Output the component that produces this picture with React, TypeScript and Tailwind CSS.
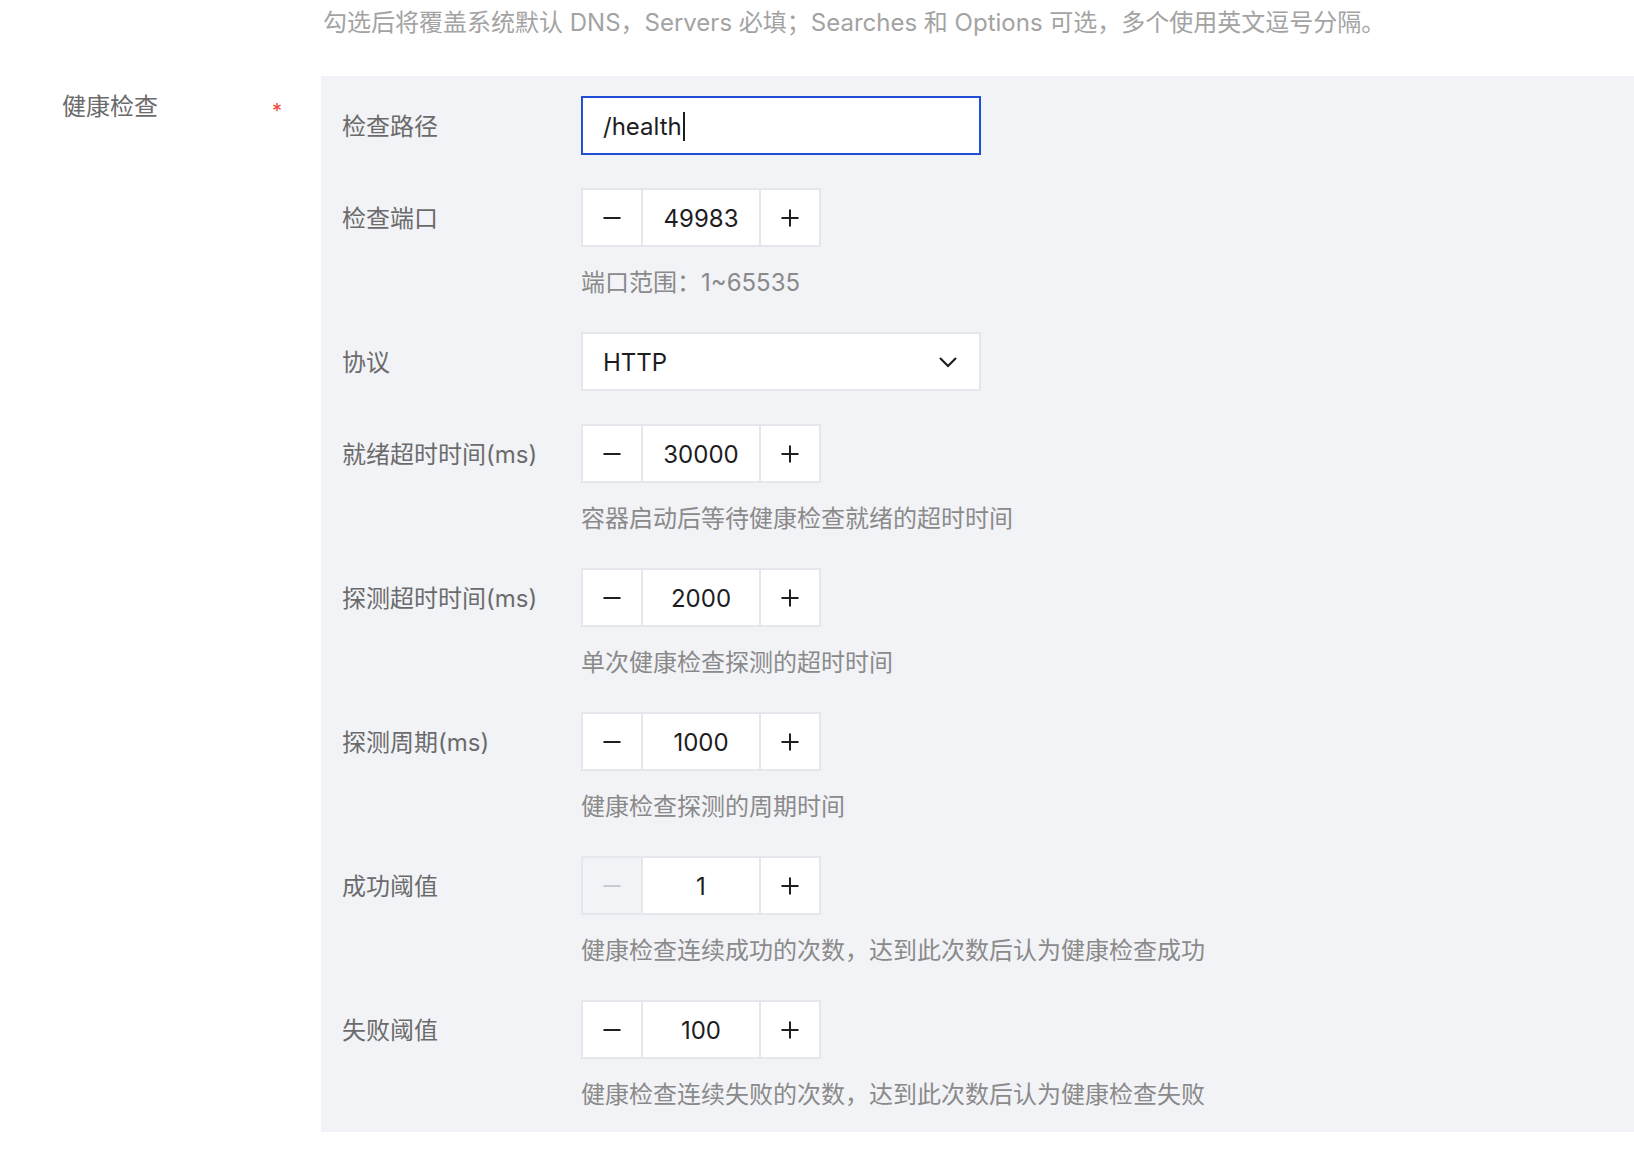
import React from "react";

const font = {
  fontFamily: 'Inter, "Noto Sans CJK SC", "Noto Sans", sans-serif',
};

function MinusIcon({ muted }: { muted?: boolean }) {
  return (
    <svg width="20" height="20" viewBox="0 0 20 20" fill="none">
      <path d="M1.5 10h17" stroke={muted ? "#c9cbd1" : "#1f1f1f"} strokeWidth="2" />
    </svg>
  );
}

function PlusIcon() {
  return (
    <svg width="20" height="20" viewBox="0 0 20 20" fill="none">
      <path d="M1.5 10h17M10 1.5v17" stroke="#1f1f1f" strokeWidth="2" />
    </svg>
  );
}

function Stepper({ value, minDisabled }: { value: string; minDisabled?: boolean }) {
  return (
    <div className="flex h-[59px] w-[240px] gap-[2px] border-2 border-[#e6e7ec] bg-[#e6e7ec]">
      <button
        className={
          minDisabled
            ? "flex w-[58px] items-center justify-center bg-[#f2f3f7]"
            : "flex w-[58px] items-center justify-center bg-white"
        }
      >
        <MinusIcon muted={minDisabled} />
      </button>
      <div className="flex w-[116px] items-center justify-center bg-white pt-[2px] text-[24px] text-[#1d1d1f]">
        {value}
      </div>
      <button className="flex w-[58px] items-center justify-center bg-white">
        <PlusIcon />
      </button>
    </div>
  );
}

function Help({ children }: { children: React.ReactNode }) {
  return (
    <div className="pt-[21px] pb-[1px] text-[24px] leading-[30px] text-[#8a8a8a]">{children}</div>
  );
}

function Row({ label, children }: { label: string; children: React.ReactNode }) {
  return (
    <div className="mb-[33px] flex last:mb-0">
      <div className="flex h-[59px] w-[239px] shrink-0 items-center pt-[2px] text-[24px] text-[#6b6b6b]">
        {label}
      </div>
      <div>{children}</div>
    </div>
  );
}

export default function App() {
  return (
    <div className="h-[1162px] w-[1634px] overflow-hidden bg-white" style={font}>
      <div className="h-[76px] pl-[323px] pt-[8px] text-[24px] leading-[30px] text-[#a3a3a3]">
        勾选后将覆盖系统默认 DNS，Servers 必填；Searches 和 Options 可选，多个使用英文逗号分隔。
      </div>
      <div className="flex">
        <div className="flex w-[321px] shrink-0 items-start pt-[16px]">
          <div className="w-[272px] pl-[62px] text-[24px] leading-[30px] text-[#6b6b6b]">健康检查</div>
          <div className="pt-[4px] text-[20px] leading-[30px] text-[#f04438]">*</div>
        </div>
        <div className="flex-1 bg-[#f2f3f7] pt-[20px] pb-[21px] pl-[21px]">
          <Row label="检查路径">
            <div className="flex h-[59px] w-[400px] items-center border-2 border-[#1f4fd6] bg-white pl-[20px] pt-[2px] text-[24px] text-[#1d1d1f]">
              /health
              <span className="ml-[1px] inline-block h-[29px] w-[2px] bg-[#1d1d1f]" />
            </div>
          </Row>
          <Row label="检查端口">
            <Stepper value="49983" />
            <Help>端口范围：1~65535</Help>
          </Row>
          <Row label="协议">
            <div className="flex h-[59px] w-[400px] items-center justify-between border-2 border-[#e6e7ec] bg-white pl-[20px] pr-[22px] text-[24px] text-[#1d1d1f]">
              <span className="pt-[2px]">HTTP</span>
              <svg width="18" height="18" viewBox="0 0 18 18" fill="none">
                <path d="M1 5l8 8 8-8" stroke="#1f1f1f" strokeWidth="2.2" />
              </svg>
            </div>
          </Row>
          <Row label="就绪超时时间(ms)">
            <Stepper value="30000" />
            <Help>容器启动后等待健康检查就绪的超时时间</Help>
          </Row>
          <Row label="探测超时时间(ms)">
            <Stepper value="2000" />
            <Help>单次健康检查探测的超时时间</Help>
          </Row>
          <Row label="探测周期(ms)">
            <Stepper value="1000" />
            <Help>健康检查探测的周期时间</Help>
          </Row>
          <Row label="成功阈值">
            <Stepper value="1" minDisabled />
            <Help>健康检查连续成功的次数，达到此次数后认为健康检查成功</Help>
          </Row>
          <Row label="失败阈值">
            <Stepper value="100" />
            <Help>健康检查连续失败的次数，达到此次数后认为健康检查失败</Help>
          </Row>
        </div>
      </div>
    </div>
  );
}
